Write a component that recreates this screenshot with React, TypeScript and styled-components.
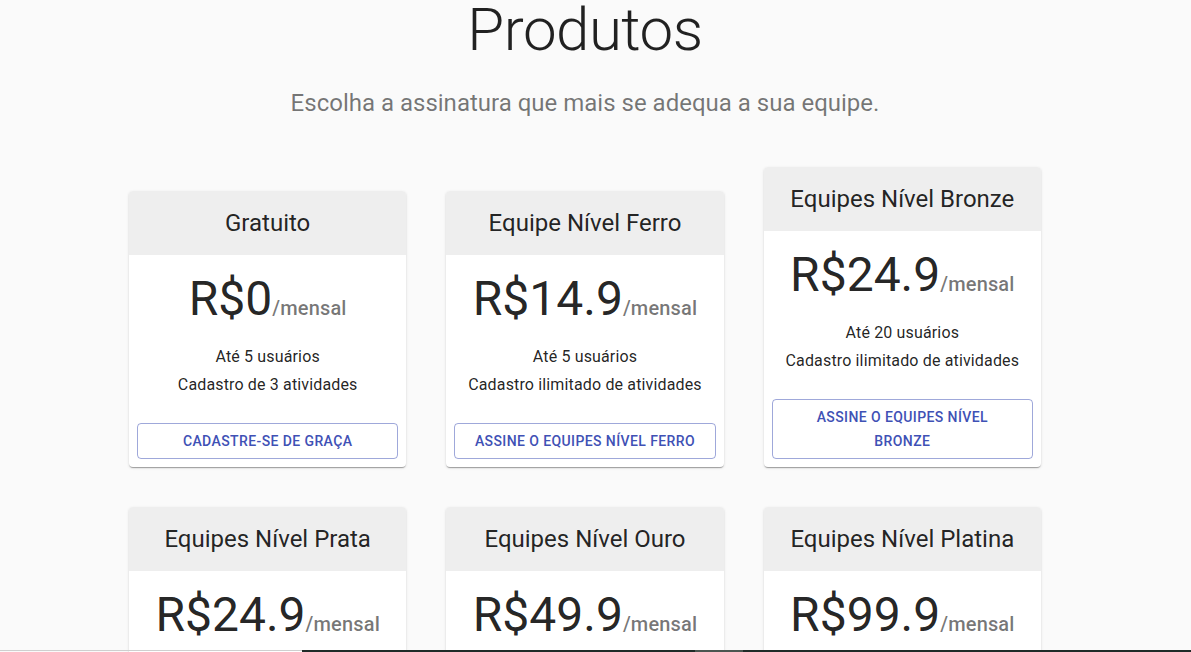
import React from "react";
import styled, { createGlobalStyle } from "styled-components";

const GlobalStyle = createGlobalStyle`
  html, body {
    margin: 0;
    padding: 0;
    background: #fafafa;
    overflow: hidden;
  }
  body {
    font-family: Roboto, "Liberation Sans", Arial, sans-serif;
    color: rgba(0, 0, 0, 0.87);
  }
  * { box-sizing: border-box; }
`;

const Page = styled.div`
  padding-right: 21px;
`;

const Hero = styled.header`
  max-width: 960px;
  margin: 0 auto;
  padding: 0 24px 48px;
  text-align: center;
`;

const Title = styled.h1`
  margin: -6px 0 21px;
  font-size: 60px;
  font-weight: 300;
  line-height: 1.2;
  letter-spacing: -0.00833em;
  color: rgba(0, 0, 0, 0.87);
`;

const Subtitle = styled.p`
  margin: 0;
  font-size: 24px;
  font-weight: 400;
  line-height: 1.334;
  color: rgba(0, 0, 0, 0.54);
`;

const Main = styled.main`
  max-width: 960px;
  margin: 0 auto;
  padding: 0 24px;
`;

const Grid = styled.div`
  display: grid;
  grid-template-columns: repeat(3, 1fr);
  column-gap: 40px;
  row-gap: 40px;
  align-items: end;
`;

const Card = styled.div`
  display: flex;
  flex-direction: column;
  background: #fff;
  border-radius: 4px;
  overflow: hidden;
  box-shadow: 0px 2px 1px -1px rgba(0, 0, 0, 0.2),
    0px 1px 1px 0px rgba(0, 0, 0, 0.14), 0px 1px 3px 0px rgba(0, 0, 0, 0.12);
`;

const CardHeader = styled.div`
  background: #eeeeee;
  padding: 16px;
  text-align: center;
  font-size: 24px;
  font-weight: 400;
  line-height: 32px;
  color: rgba(0, 0, 0, 0.87);
`;

const CardContent = styled.div`
  padding: 16px;
`;

const PriceRow = styled.div`
  display: flex;
  justify-content: center;
  align-items: baseline;
  margin-bottom: 16px;
`;

const Price = styled.span`
  font-size: 48px;
  font-weight: 400;
  line-height: 56px;
  color: rgba(0, 0, 0, 0.87);
`;

const Period = styled.span`
  font-size: 20px;
  font-weight: 500;
  line-height: 1.6;
  letter-spacing: 0.0075em;
  color: rgba(0, 0, 0, 0.54);
`;

const Features = styled.ul`
  margin: 0;
  padding: 0;
  list-style: none;
`;

const Feature = styled.li`
  text-align: center;
  font-size: 16px;
  line-height: 28px;
  letter-spacing: 0.00938em;
  color: rgba(0, 0, 0, 0.87);
`;

const CardActions = styled.div`
  padding: 8px;
  display: flex;
`;

const OutlinedButton = styled.button`
  width: 100%;
  background: transparent;
  border: 1px solid rgba(63, 81, 181, 0.5);
  border-radius: 4px;
  padding: 5px 15px;
  color: #3f51b5;
  font-family: Roboto, "Liberation Sans", Arial, sans-serif;
  font-size: 14px;
  font-weight: 500;
  line-height: 24px;
  letter-spacing: 0.02857em;
  text-transform: uppercase;
  cursor: pointer;
`;

const BottomStrip = styled.div`
  position: fixed;
  left: 0;
  right: 0;
  bottom: 0;
  height: 2px;
  display: flex;
`;

const StripLight = styled.div`
  width: 302px;
  border-top: 1px solid #cfcfcf;
`;

const StripDark = styled.div<{ $w?: number; $tone?: string }>`
  ${(p) => (p.$w ? `width: ${p.$w}px;` : "flex: 1;")}
  background: ${(p) => p.$tone || "#1f2b28"};
`;

type Tier = {
  title: string;
  price: string;
  features: string[];
  button: string;
};

const tiers: Tier[] = [
  {
    title: "Gratuito",
    price: "0",
    features: ["Até 5 usuários", "Cadastro de 3 atividades"],
    button: "Cadastre-se de graça",
  },
  {
    title: "Equipe Nível Ferro",
    price: "14.9",
    features: ["Até 5 usuários", "Cadastro ilimitado de atividades"],
    button: "Assine o Equipes Nível Ferro",
  },
  {
    title: "Equipes Nível Bronze",
    price: "24.9",
    features: ["Até 20 usuários", "Cadastro ilimitado de atividades"],
    button: "Assine o Equipes Nível Bronze",
  },
  {
    title: "Equipes Nível Prata",
    price: "24.9",
    features: ["Até 50 usuários", "Cadastro ilimitado de atividades"],
    button: "Assine o Equipes Nível Prata",
  },
  {
    title: "Equipes Nível Ouro",
    price: "49.9",
    features: ["Até 100 usuários", "Cadastro ilimitado de atividades"],
    button: "Assine o Equipes Nível Ouro",
  },
  {
    title: "Equipes Nível Platina",
    price: "99.9",
    features: ["Usuários ilimitados", "Cadastro ilimitado de atividades"],
    button: "Assine o Nível Platina",
  },
];

export default function App() {
  return (
    <Page>
      <GlobalStyle />
      <Hero>
        <Title>Produtos</Title>
        <Subtitle>Escolha a assinatura que mais se adequa a sua equipe.</Subtitle>
      </Hero>
      <Main>
        <Grid>
          {tiers.map((t) => (
            <Card key={t.title}>
              <CardHeader>{t.title}</CardHeader>
              <CardContent>
                <PriceRow>
                  <Price>R${t.price}</Price>
                  <Period>/mensal</Period>
                </PriceRow>
                <Features>
                  {t.features.map((f) => (
                    <Feature key={f}>{f}</Feature>
                  ))}
                </Features>
              </CardContent>
              <CardActions>
                <OutlinedButton>{t.button}</OutlinedButton>
              </CardActions>
            </Card>
          ))}
        </Grid>
      </Main>
      <BottomStrip>
        <StripLight />
        <StripDark $w={393} />
        <StripDark $w={48} $tone="#4b5651" />
        <StripDark />
      </BottomStrip>
    </Page>
  );
}
